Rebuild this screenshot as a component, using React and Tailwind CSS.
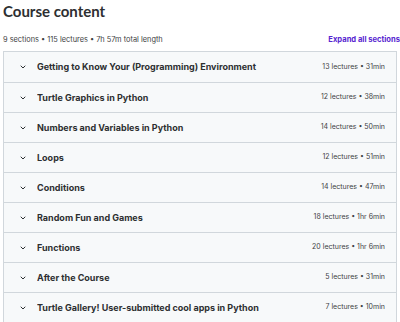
import { ChevronDown } from 'lucide-react';

const sections = [
  { title: 'Getting to Know Your (Programming) Environment', lectures: 13, length: '31min' },
  { title: 'Turtle Graphics in Python', lectures: 12, length: '38min' },
  { title: 'Numbers and Variables in Python', lectures: 14, length: '50min' },
  { title: 'Loops', lectures: 12, length: '51min' },
  { title: 'Conditions', lectures: 14, length: '47min' },
  { title: 'Random Fun and Games', lectures: 18, length: '1hr 6min' },
  { title: 'Functions', lectures: 20, length: '1hr 6min' },
  { title: 'After the Course', lectures: 5, length: '31min' },
  { title: 'Turtle Gallery! User-submitted cool apps in Python', lectures: 7, length: '10min' },
];

export default function App() {
  return (
    <div className="w-[400px] h-[322px] overflow-hidden bg-white text-[#2d2f31]" style={{ fontFamily: 'Inter, "Open Sans", sans-serif' }}>
      <div className="pl-[3px] pt-[1px]">
        <h2 className="text-[15px] leading-[20px] font-bold" style={{ fontFamily: 'Lato, sans-serif' }}>Course content</h2>
      </div>
      <div className="flex items-end justify-between pl-[3px] pr-0 mt-[13px] h-[12px]">
        <span className="text-[7.4px] leading-[12px] text-[#3e4143]">9 sections • 115 lectures • 7h 57m total length</span>
        <button className="text-[7.6px] leading-[12px] font-bold text-[#5624d0] whitespace-nowrap">Expand all sections</button>
      </div>
      <div className="mt-[5px] ml-[3px] w-[394px] border border-[#d1d7dc]">
        {sections.map((s, i) => (
          <div
            key={i}
            className={`h-[30px] flex items-center bg-[#f7f9fa] pl-[15px] pr-[11px] ${i > 0 ? 'border-t border-[#d1d7dc]' : ''}`}
          >
            <ChevronDown className="w-[8px] h-[8px] text-[#2d2f31] shrink-0" strokeWidth={3} />
            <span className="ml-[10px] flex-1 text-[9px] font-bold truncate">{s.title}</span>
            <span className="text-[7px] whitespace-nowrap text-[#3e4143]">{s.lectures} lectures • {s.length}</span>
          </div>
        ))}
      </div>
    </div>
  );
}
